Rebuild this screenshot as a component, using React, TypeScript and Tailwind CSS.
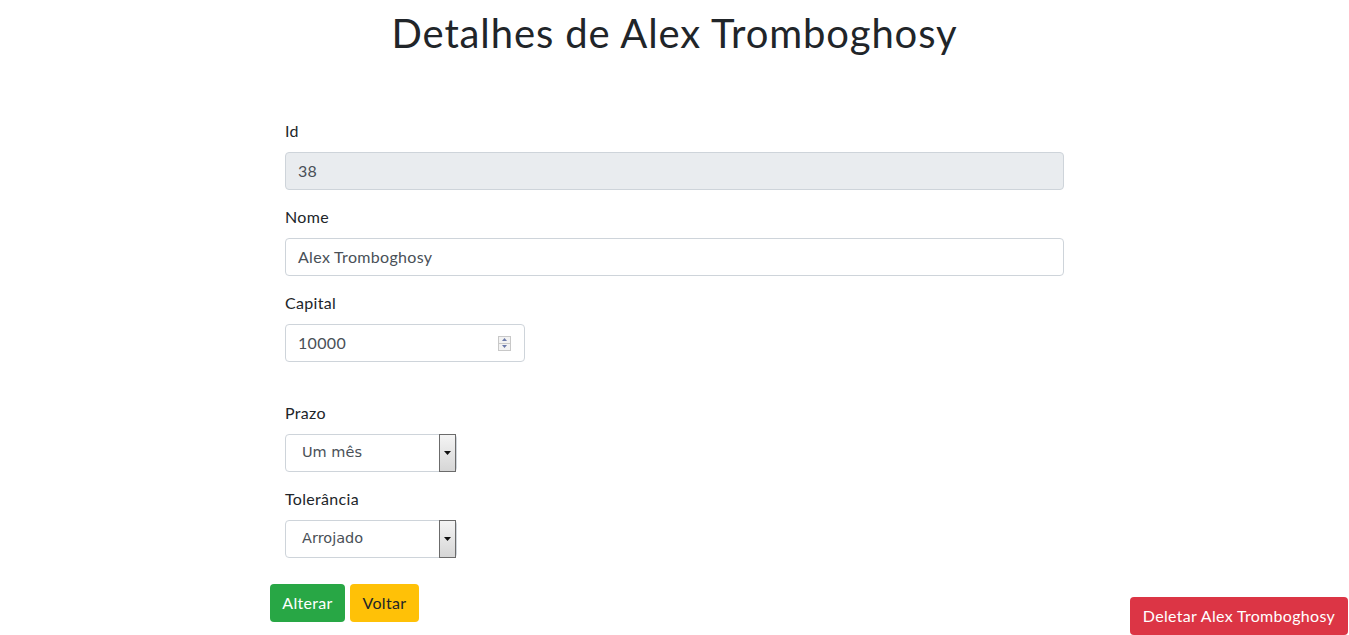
import React from 'react';

const font = { fontFamily: 'Lato, "Noto Sans", sans-serif' };

const Label: React.FC<{ children: React.ReactNode }> = ({ children }) => (
  <label className="block text-base leading-[22px] tracking-[0.02em] text-[#212529] mb-[10px]">{children}</label>
);

const FakeSelect: React.FC<{ value: string }> = ({ value }) => (
  <div className="flex items-stretch w-[172px] h-[38px] border border-[#ced4da] rounded bg-white">
    <div className="flex-1 flex items-center pl-4 text-[14.5px] text-[#495057] font-['DejaVu_Sans',sans-serif]">
      {value}
    </div>
    <div className="w-[17px] my-[-1px] border border-[#6b6b6b] bg-gradient-to-b from-[#f4f4f4] to-[#d6d6d6] flex items-center justify-center">
      <svg width="7" height="4" viewBox="0 0 7 4">
        <path d="M0 0h7L3.5 4z" fill="#111" />
      </svg>
    </div>
  </div>
);

const App: React.FC = () => {
  return (
    <div className="min-h-[635px] bg-white relative" style={font}>
      <h1 className="text-center text-[40px] leading-[48px] tracking-[0.022em] text-[#212529] pt-[9px]">
        Detalhes de Alex Tromboghosy
      </h1>

      <div className="w-[809px] ml-[270px] mt-[63px]">
        <div className="px-[15px]">
          <div className="mb-4">
            <Label>Id</Label>
            <div className="h-[38px] flex items-center px-3 border border-[#ced4da] rounded bg-[#e9ecef] text-base tracking-[0.02em] text-[#495057]">
              38
            </div>
          </div>
          <div className="mb-4">
            <Label>Nome</Label>
            <div className="h-[38px] flex items-center px-3 border border-[#ced4da] rounded bg-white text-base tracking-[0.02em] text-[#495057]">
              Alex Tromboghosy
            </div>
          </div>
          <div className="mb-10">
            <Label>Capital</Label>
            <div className="w-[240px] h-[38px] flex items-center justify-between px-3 border border-[#ced4da] rounded bg-white text-base tracking-[0.02em] text-[#495057]">
              <span>10000</span>
              <div className="flex flex-col w-[13px] h-[15px] border border-[#c8c8c8] bg-[#f2f2f2] mr-[1px]">
                <div className="flex-1 flex items-center justify-center border-b border-[#c8c8c8]">
                  <svg width="5" height="3" viewBox="0 0 5 3"><path d="M0 3h5L2.5 0z" fill="#6a78a8" /></svg>
                </div>
                <div className="flex-1 flex items-center justify-center">
                  <svg width="5" height="3" viewBox="0 0 5 3"><path d="M0 0h5L2.5 3z" fill="#6a78a8" /></svg>
                </div>
              </div>
            </div>
          </div>
          <div className="mb-4">
            <Label>Prazo</Label>
            <FakeSelect value="Um mês" />
          </div>
          <div>
            <Label>Tolerância</Label>
            <FakeSelect value="Arrojado" />
          </div>
        </div>
        <div className="flex gap-[5px] mt-[26px]">
          <button className="h-[38px] w-[75px] rounded bg-[#28a745] text-white text-base tracking-[0.02em]">Alterar</button>
          <button className="h-[38px] w-[69px] rounded bg-[#ffc107] text-[#212529] text-base tracking-[0.02em]">Voltar</button>
        </div>
      </div>

      <div className="flex justify-end pr-[1px] -mt-[25px]">
        <button className="h-[38px] w-[218px] rounded bg-[#dc3545] text-white text-base tracking-[0.02em]">Deletar Alex Tromboghosy</button>
      </div>
    </div>
  );
};

export default App;
